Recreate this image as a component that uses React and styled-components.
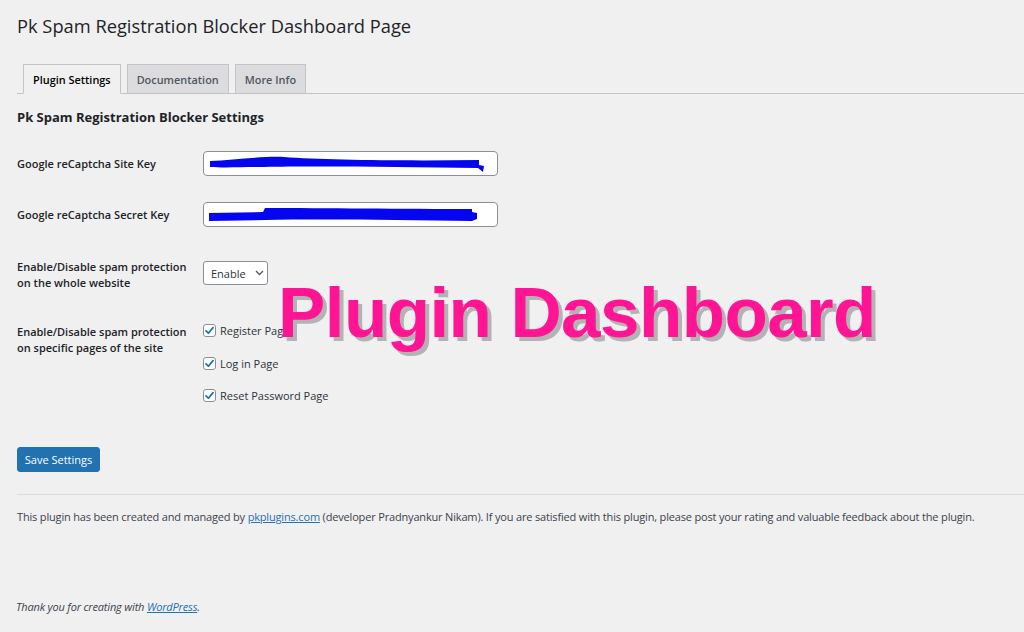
import React from 'react';
import styled, { createGlobalStyle } from 'styled-components';

const GlobalStyle = createGlobalStyle`
  body {
    margin: 0;
    background: #f0f0f1;
    font-family: "Open Sans", "Noto Sans", sans-serif;
    color: #1d2327;
  }
`

const Page = styled.div`
  position: relative;
  min-height: 632px;
  padding-left: 17px;
  box-sizing: border-box;
`

const Title = styled.h1`
  margin: 0;
  padding-top: 14px;
  font-size: 18.3px;
  font-weight: 400;
  line-height: 24px;
  color: #1d2327;
`

const TabBar = styled.nav`
  display: flex;
  gap: 6px;
  margin-top: 26px;
  padding-left: 6px;
  border-bottom: 1px solid #c3c4c7;
  height: 30px;
  box-sizing: border-box;
`

const Tab = styled.a`
  display: flex;
  align-items: center;
  padding: 0 9px;
  height: 30px;
  box-sizing: border-box;
  border: 1px solid #c3c4c7;
  border-bottom-color: ${p => p.active ? '#f0f0f1' : '#c3c4c7'};
  background: ${p => p.active ? '#f0f0f1' : '#dcdcde'};
  color: ${p => p.active ? '#000' : '#50575e'};
  font-size: 10.9px;
  font-weight: 600;
  text-decoration: none;
`

const SectionTitle = styled.h2`
  margin: 13px 0 0;
  font-size: 13px;
  font-weight: 700;
  line-height: 20px;
  color: #1d2327;
`

const FormTable = styled.div`
  display: flex;
  flex-direction: column;
  margin-top: 24px;
`

const Row = styled.div`
  display: flex;
  align-items: flex-start;
  margin-top: ${p => p.gap || 0}px;
`

const Label = styled.div`
  width: 186px;
  flex-shrink: 0;
  padding-top: ${p => p.pad || 0}px;
  font-size: 11px;
  font-weight: 600;
  line-height: 16px;
  color: #1d2327;
`

const TextBox = styled.div`
  width: 295px;
  height: 25px;
  box-sizing: border-box;
  background: #fff;
  border: 1px solid #8c8f94;
  border-radius: 4px;
  overflow: hidden;
  svg { display: block; }
`

const Select = styled.div`
  display: flex;
  align-items: center;
  gap: 9px;
  width: 65px;
  height: 24px;
  margin-top: 2px;
  box-sizing: border-box;
  padding-left: 7px;
  background: #fff;
  border: 1px solid #8c8f94;
  border-radius: 3px;
  font-size: 11px;
  color: #2c3338;
`

const CheckList = styled.div`
  display: flex;
  flex-direction: column;
  gap: 15.5px;
  margin-top: -2px;
`

const CheckItem = styled.label`
  display: flex;
  align-items: center;
  gap: 4px;
  font-size: 11px;
  line-height: 17px;
  color: #2c3338;
`

const Box = styled.span`
  display: flex;
  align-items: center;
  justify-content: center;
  width: 13px;
  height: 13px;
  box-sizing: border-box;
  background: #fff;
  border: 1px solid #8c8f94;
  border-radius: 3px;
`

const Button = styled.button`
  margin-top: 43px;
  height: 25px;
  width: 83px;
  padding: 0;
  background: #2271b1;
  border: 1px solid #2271b1;
  border-radius: 3px;
  color: #fff;
  font-family: inherit;
  font-size: 11px;
`

const Divider = styled.hr`
  margin: 22px 0 0;
  border: 0;
  border-top: 1px solid #dcdcde;
`

const Credit = styled.p`
  margin: 14px 0 0;
  font-size: 11px;
  letter-spacing: -0.17px;
  line-height: 16px;
  color: #3c434a;
  a { color: #2271b1; }
`

const Thanks = styled.p`
  margin: 74px 0 0 -1px;
  font-size: 11px;
  letter-spacing: -0.17px;
  font-style: italic;
  line-height: 16px;
  color: #3c434a;
  a { color: #2271b1; }
`

const Watermark = styled.div`
  position: absolute;
  left: 278px;
  top: 277px;
  font-family: "Liberation Sans", Arial, sans-serif;
  font-weight: 700;
  font-size: 71px;
  line-height: 1;
  letter-spacing: -0.6px;
  color: #ff1493;
  text-shadow: 4px 4px 0 #b3b3b3;
  white-space: nowrap;
`

const Scribble = ({ d }) => (
  <svg width="293" height="23" viewBox="0 0 293 23">
    <path d={d} fill="#0505f0" />
  </svg>
)

const Check = () => (
  <svg width="11" height="11" viewBox="0 0 11 11">
    <path d="M2 5.8 L4.4 8.2 L9 2.6" stroke="#2271b1" strokeWidth="1.8" fill="none" strokeLinecap="round" strokeLinejoin="round" />
  </svg>
)

const App = () => {
  const pages = ['Register Page', 'Log in Page', 'Reset Password Page'];

  return (
    <Page>
      <GlobalStyle />
      <Title>Pk Spam Registration Blocker Dashboard Page</Title>
      <TabBar>
        <Tab active>Plugin Settings</Tab>
        <Tab>Documentation</Tab>
        <Tab>More Info</Tab>
      </TabBar>
      <SectionTitle>Pk Spam Registration Blocker Settings</SectionTitle>
      <FormTable>
        <Row>
          <Label pad={5}>Google reCaptcha Site Key</Label>
          <TextBox>
            <Scribble d="M6 9 C30 8 60 4 80 5 C120 8 200 9 275 8 L275 13 L280 14 L279 20 L274 16 C200 15 110 14 60 15 C40 15 20 16 6 15 Z" />
          </TextBox>
        </Row>
        <Row gap={26}>
          <Label pad={5}>Google reCaptcha Secret Key</Label>
          <TextBox>
            <Scribble d="M5 10 L59 9 L61 5 C120 5 200 6 268 6 L268 9 L273 10 L273 16 L268 18 C200 17 120 16 61 17 L5 18 Z" />
          </TextBox>
        </Row>
        <Row gap={32}>
          <Label>Enable/Disable spam protection on the whole website</Label>
          <Select>
            Enable
            <svg width="9" height="6" viewBox="0 0 9 6">
              <path d="M1 1 L4.5 4.5 L8 1" stroke="#50575e" strokeWidth="1.3" fill="none" />
            </svg>
          </Select>
        </Row>
        <Row gap={33}>
          <Label>Enable/Disable spam protection on specific pages of the site</Label>
          <CheckList>
            {pages.map(p => (
              <CheckItem key={p}>
                <Box><Check /></Box>
                {p}
              </CheckItem>
            ))}
          </CheckList>
        </Row>
      </FormTable>
      <Button>Save Settings</Button>
      <Divider />
      <Credit>
        This plugin has been created and managed by <a href="#">pkplugins.com</a> (developer Pradnyankur Nikam). If you are satisfied with this plugin, please post your rating and valuable feedback about the plugin.
      </Credit>
      <Thanks>
        Thank you for creating with <a href="#">WordPress</a>.
      </Thanks>
      <Watermark>Plugin Dashboard</Watermark>
    </Page>
  )
}

export default App;
